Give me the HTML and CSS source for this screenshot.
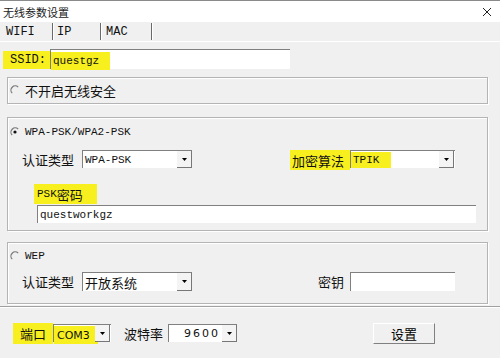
FILE: index.html
```html
<!DOCTYPE html>
<html lang="zh-CN">
<head>
  <meta charset="UTF-8" />
  <title>无线参数设置</title>
  <link rel="stylesheet" href="styles.css">
</head>
<body>

<div class="titlebar">
  <span class="title">无线参数设置</span>
  <svg class="close" width="10" height="10" viewBox="0 0 10 10"><path d="M1 1 L9 9 M9 1 L1 9" stroke="#222" stroke-width="1" fill="none"/></svg>
</div>

<div class="tabs">
  <div class="tab t1">WIFI</div>
  <div class="tab t2">IP</div>
  <div class="tab t3">MAC</div>
</div>

<div class="panel">

  <div class="ssid-row">
    <span class="hl ssid-label">SSID:</span>
    <div class="edit ssid-edit"><span class="hl ssid-val">questgz</span></div>
  </div>

  <div class="group g1">
    <div class="radio-row">
      <svg class="radio" width="10" height="10" viewBox="0 0 10 10"><path d="M2.2 8.2 A4.2 4.2 0 0 1 8.2 2.2" stroke="#777" stroke-width="1.2" fill="none"/></svg>
      <span class="cn">不开启无线安全</span>
    </div>
  </div>

  <div class="group g2">
    <div class="radio-row">
      <svg class="radio" width="10" height="10" viewBox="0 0 10 10"><path d="M2.2 8.2 A4.2 4.2 0 0 1 8.2 2.2" stroke="#777" stroke-width="1.2" fill="none"/><circle cx="5" cy="5" r="1.6" fill="#111"/></svg>
      <span class="mono">WPA-PSK/WPA2-PSK</span>
    </div>
    <div class="field-row">
      <span class="cn label">认证类型</span>
      <div class="combo w110"><span class="mono val">WPA-PSK</span><span class="drop"><svg width="5" height="3" viewBox="0 0 5 3"><path d="M0 0 H5 L2.5 3 Z" fill="#000"/></svg></span></div>
      <span class="cn hl enc-label">加密算法</span>
      <div class="combo w105"><span class="mono val hl tpik">TPIK</span><span class="drop"><svg width="5" height="3" viewBox="0 0 5 3"><path d="M0 0 H5 L2.5 3 Z" fill="#000"/></svg></span></div>
    </div>
    <div class="psk-row">
      <span class="hl psk-label"><span class="mono">PSK</span><span class="cn">密码</span></span>
    </div>
    <div class="edit psk-edit"><span class="mono">questworkgz</span></div>
  </div>

  <div class="group g3">
    <div class="radio-row">
      <svg class="radio" width="10" height="10" viewBox="0 0 10 10"><path d="M2.2 8.2 A4.2 4.2 0 0 1 8.2 2.2" stroke="#777" stroke-width="1.2" fill="none"/></svg>
      <span class="mono">WEP</span>
    </div>
    <div class="field-row">
      <span class="cn label">认证类型</span>
      <div class="combo w110 tall"><span class="cn val">开放系统</span><span class="drop"><svg width="5" height="3" viewBox="0 0 5 3"><path d="M0 0 H5 L2.5 3 Z" fill="#000"/></svg></span></div>
      <span class="cn key-label">密钥</span>
      <div class="edit key-edit"></div>
    </div>
  </div>

</div>

<div class="bottom">
  <span class="hl cn port-label">端口</span>
  <div class="combo w58"><span class="sans val hl com">COM3</span><span class="drop"><svg width="5" height="3" viewBox="0 0 5 3"><path d="M0 0 H5 L2.5 3 Z" fill="#000"/></svg></span></div>
  <span class="cn baud-label">波特率</span>
  <div class="combo w69"><span class="sans val baud">9600</span><span class="drop"><svg width="5" height="3" viewBox="0 0 5 3"><path d="M0 0 H5 L2.5 3 Z" fill="#000"/></svg></span></div>
  <button class="btn cn">设置</button>
</div>

</body>
</html>
```

FILE: styles.css
```css
* { box-sizing: border-box; }
body { margin: 0; width: 500px; height: 358px; background: #f0f0f0; font-family: "Noto Sans CJK SC", sans-serif; color: #111; overflow: hidden; }

.cn { font-family: "Noto Sans CJK SC", sans-serif; font-size: 13px; }
.mono { font-family: "Liberation Mono", "Noto Sans CJK SC", monospace; font-size: 11px; }
.sans { font-family: "DejaVu Sans", sans-serif; font-size: 11px; }
.hl { background: #f7f01e; }

/* window title */
.titlebar { height: 22px; background: #fff; border-top: 1px solid #8a8a8a; display: flex; align-items: center; justify-content: space-between; padding: 0 8px 0 3px; }
.title { font-size: 11px; color: #222; }
.close { margin-top: 1px; }

/* tabs */
.tabs { height: 19px; display: flex; align-items: center; }
.tab { height: 17px; display: flex; align-items: center; font-family: "Liberation Mono", monospace; font-size: 12px; border-right: 1px solid #6a6a6a; box-shadow: 1px 0 0 #fff; }
.t1 { width: 53px; padding-left: 6px; }
.t2 { width: 48px; padding-left: 4px; }
.t3 { width: 51px; padding-left: 5px; }

/* tab page */
.panel { border-top: 1px solid #fff; border-bottom: 1px solid #a0a0a0; box-shadow: 0 1px 0 #fff; padding: 7px 0 2px; height: 266px; }

.ssid-row { display: flex; align-items: center; height: 20px; padding-left: 3px; }
.ssid-label { width: 47px; height: 18px; padding-left: 7px; margin-top: 2px; font-family: "Liberation Mono", monospace; font-size: 12px; display: flex; align-items: center; }
.edit { background: #fff; border-top: 1px solid #808080; border-left: 1px solid #808080; display: flex; align-items: center; }
.ssid-edit { width: 240px; height: 20px; }
.ssid-val { width: 59px; height: 18px; margin-top: 2px; padding-left: 2px; font-family: "Liberation Mono", monospace; font-size: 11px; display: flex; align-items: center; }

.group { width: 481px; margin-left: 7px; border: 1px solid #b4b4b4; box-shadow: inset 1px 1px 0 #fff, 1px 1px 0 #fff; }
.g1 { height: 27px; margin-top: 8px; padding: 4px 0 0 2px; }
.g2 { height: 114px; margin-top: 13px; padding: 6px 0 0 2px; }
.g3 { height: 62px; margin-top: 11px; padding: 5px 0 0 2px; }

.radio-row { display: flex; align-items: center; height: 16px; gap: 5px; }
.radio { flex: none; }

.field-row { display: flex; align-items: center; margin-top: 8px; padding-left: 12px; }
.label { width: 60px; }

.combo { height: 18px; background: #fff; border-top: 1px solid #808080; border-left: 1px solid #808080; display: flex; align-items: stretch; }
.combo.tall { height: 19px; }
.combo .val { flex: 1; display: flex; align-items: center; padding-left: 2px; }
.drop { width: 15px; flex: none; background: #f4f4f4; border-right: 1px solid #777; border-bottom: 1px solid #777; display: flex; align-items: center; justify-content: center; }
.w110 { width: 110px; }
.w105 { width: 105px; }
.w58 { width: 58px; }
.w69 { width: 69px; }

.enc-label { margin-left: 98px; height: 20px; padding-left: 2px; width: 60px; display: flex; align-items: center; margin-top: 2px; }
.combo .tpik { flex: none; width: 40px; margin-top: 1px; }
.combo .val.tpik + .drop { margin-left: 48px; }

.psk-row { display: flex; align-items: center; margin-top: 14px; padding-left: 24px; height: 20px; }
.psk-label { display: flex; align-items: center; height: 20px; padding: 0 3px; width: 63px; }
.psk-edit { width: 439px; height: 18px; margin: 1px 0 0 27px; padding-left: 2px; }

.key-label { margin-left: 126px; width: 32px; }
.key-edit { width: 105px; height: 19px; }

/* bottom bar */
.bottom { display: flex; align-items: center; height: 24px; margin-top: 14px; padding-left: 13px; }
.port-label { width: 40px; height: 21px; padding-left: 7px; display: flex; align-items: center; }
.combo .com { flex: none; width: 44px; height: 18px; margin-top: 1px; padding-left: 3px; }
.combo .val.com + .drop { margin-left: -3px; }
.baud-label { margin-left: 13px; width: 44px; }
.combo .baud { justify-content: flex-end; padding-right: 2px; letter-spacing: 2px; }
.btn { margin-left: 136px; width: 62px; height: 21px; background: #f0f0f0; border: 1px solid; border-color: #fff #808080 #808080 #fff; font-size: 13px; padding: 0; display: flex; align-items: center; justify-content: center; }
```
